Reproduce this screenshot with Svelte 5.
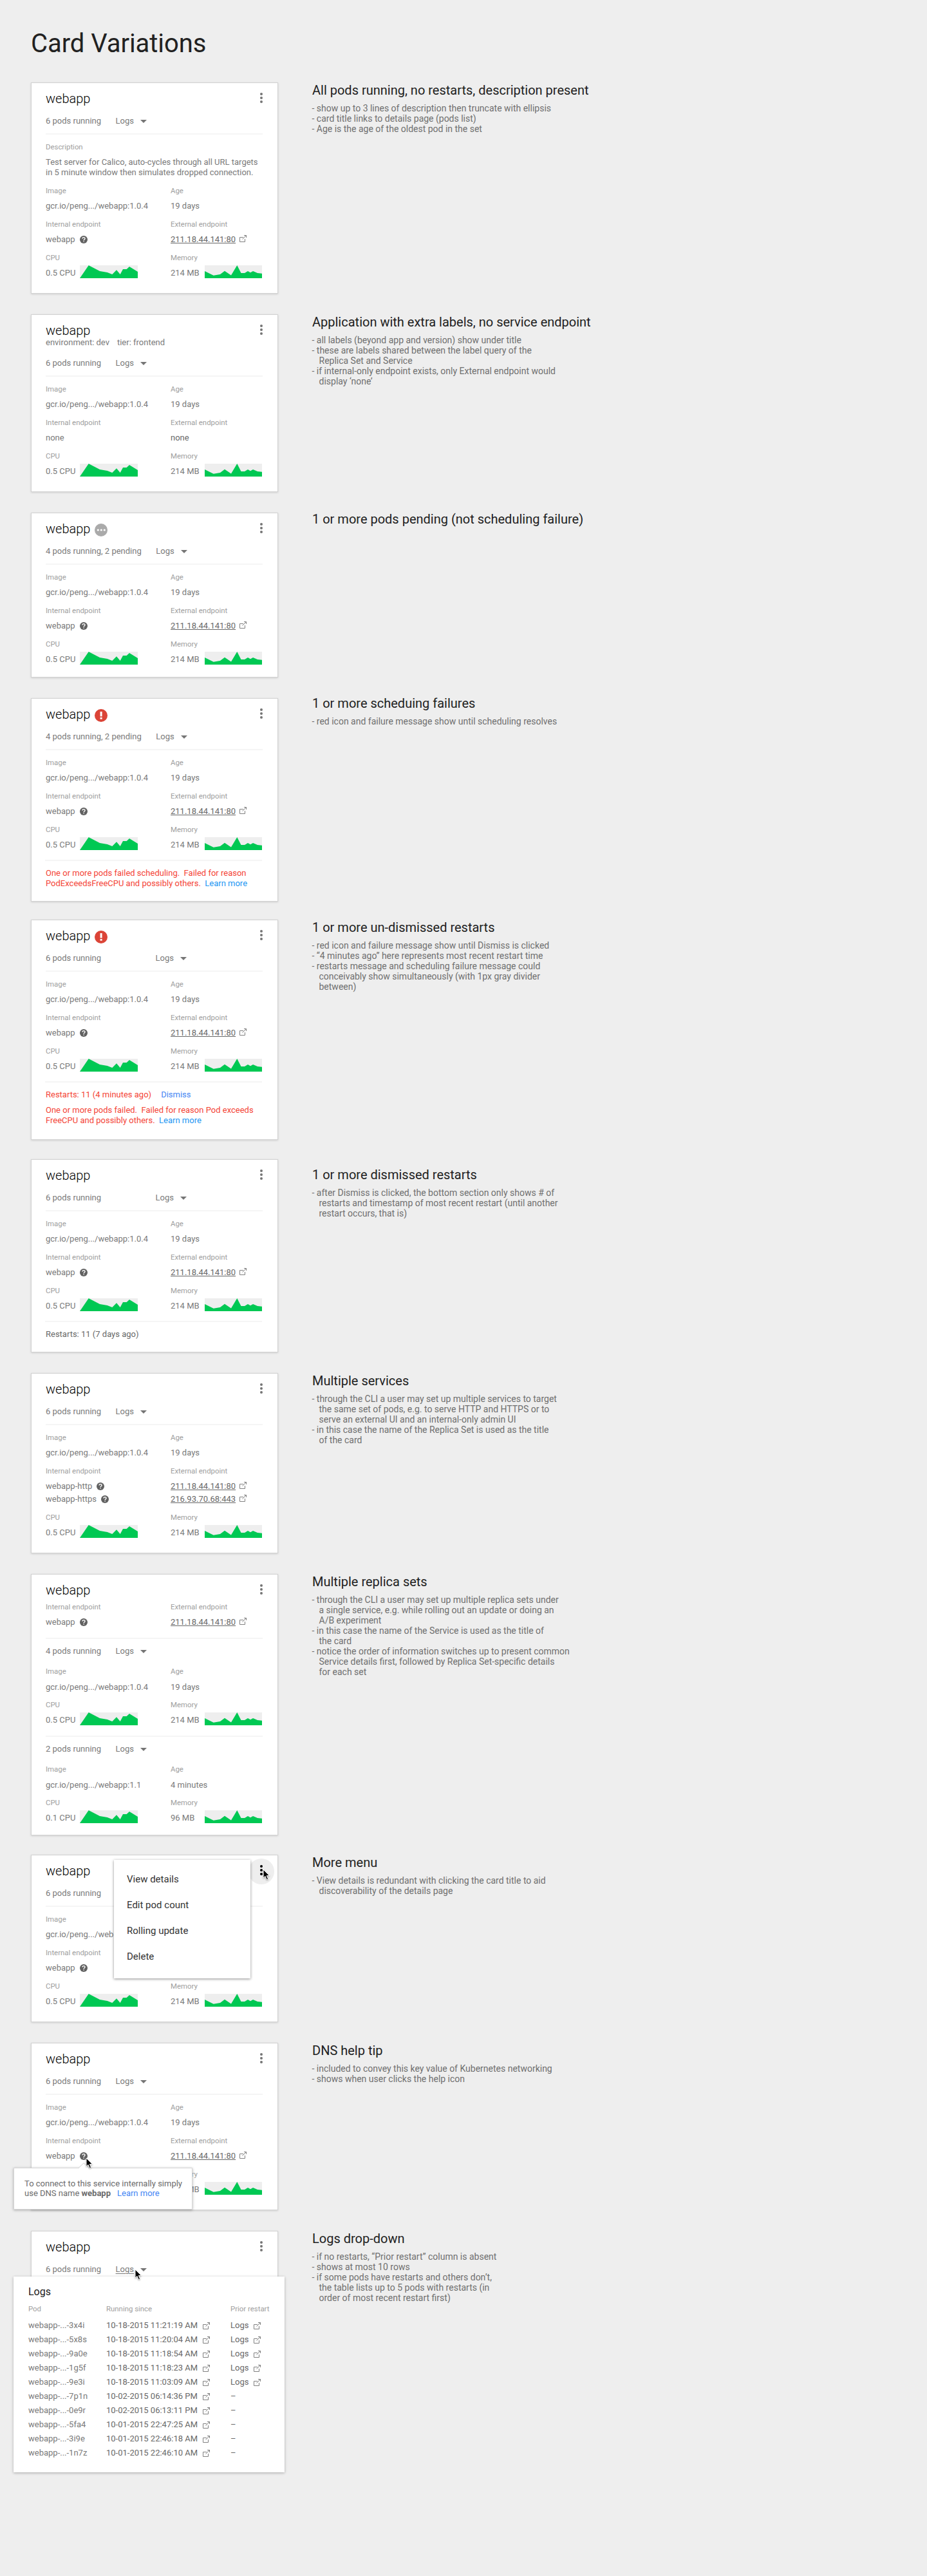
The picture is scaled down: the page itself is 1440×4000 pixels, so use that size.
<script lang="ts">
  type Pair = { name: string; ip: string };
  type Field =
    | { kind: 'description'; text: string }
    | { kind: 'image'; image: string; age: string }
    | { kind: 'endpoints'; items: Pair[] }
    | { kind: 'usage'; cpu: string; memory: string };
  type Section = { pods?: string; wideLogs?: boolean; fields: Field[] };
  type Variation = {
    id: string;
    heading: string;
    notes: string[];
    status?: 'pending' | 'error';
    labels?: string[];
    sections: Section[];
    footer?: 'scheduling' | 'restarts' | 'dismissed';
    overlay?: 'menu' | 'tip' | 'logs';
  };

  const image: Field = { kind: 'image', image: 'gcr.io/peng.../webapp:1.0.4', age: '19 days' };
  const endpoint: Field = { kind: 'endpoints', items: [{ name: 'webapp', ip: '211.18.44.141:80' }] };
  const noEndpoint: Field = { kind: 'endpoints', items: [] };
  const usage: Field = { kind: 'usage', cpu: '0.5 CPU', memory: '214 MB' };

  const variations: Variation[] = [
    {
      id: 'description',
      heading: 'All pods running, no restarts, description present',
      notes: [
        'show up to 3 lines of description then truncate with ellipsis',
        'card title links to details page (pods list)',
        'Age is the age of the oldest pod in the set',
      ],
      sections: [
        {
          pods: '6 pods running',
          fields: [
            {
              kind: 'description',
              text: 'Test server for Calico, auto-cycles through all URL targets\nin 5 minute window then simulates dropped connection.',
            },
            image,
            endpoint,
            usage,
          ],
        },
      ],
    },
    {
      id: 'labels',
      heading: 'Application with extra labels, no service endpoint',
      notes: [
        'all labels (beyond app and version) show under title',
        'these are labels shared between the label query of the\nReplica Set and Service',
        'if internal-only endpoint exists, only External endpoint would\ndisplay ‘none’',
      ],
      labels: ['environment: dev', 'tier: frontend'],
      sections: [{ pods: '6 pods running', fields: [image, noEndpoint, usage] }],
    },
    {
      id: 'pending',
      heading: '1 or more pods pending (not scheduling failure)',
      notes: [],
      status: 'pending',
      sections: [{ pods: '4 pods running, 2 pending', wideLogs: true, fields: [image, endpoint, usage] }],
    },
    {
      id: 'scheduling',
      heading: '1 or more scheduing failures',
      notes: ['red icon and failure message show until scheduling resolves'],
      status: 'error',
      sections: [{ pods: '4 pods running, 2 pending', wideLogs: true, fields: [image, endpoint, usage] }],
      footer: 'scheduling',
    },
    {
      id: 'restarts',
      heading: '1 or more un-dismissed restarts',
      notes: [
        'red icon and failure message show until Dismiss is clicked',
        '“4 minutes ago” here represents most recent restart time',
        'restarts message and scheduling failure message could\nconceivably show simultaneously (with 1px gray divider\nbetween)',
      ],
      status: 'error',
      sections: [{ pods: '6 pods running', wideLogs: true, fields: [image, endpoint, usage] }],
      footer: 'restarts',
    },
    {
      id: 'dismissed',
      heading: '1 or more dismissed restarts',
      notes: [
        'after Dismiss is clicked, the bottom section only shows # of\nrestarts and timestamp of most recent restart (until another\nrestart occurs, that is)',
      ],
      sections: [{ pods: '6 pods running', wideLogs: true, fields: [image, endpoint, usage] }],
      footer: 'dismissed',
    },
    {
      id: 'services',
      heading: 'Multiple services',
      notes: [
        'through the CLI a user may set up multiple services to target\nthe same set of pods, e.g. to serve HTTP and HTTPS or to\nserve an external UI and an internal-only admin UI',
        'in this case the name of the Replica Set is used as the title\nof the card',
      ],
      sections: [
        {
          pods: '6 pods running',
          fields: [
            image,
            {
              kind: 'endpoints',
              items: [
                { name: 'webapp-http', ip: '211.18.44.141:80' },
                { name: 'webapp-https', ip: '216.93.70.68:443' },
              ],
            },
            usage,
          ],
        },
      ],
    },
    {
      id: 'replicas',
      heading: 'Multiple replica sets',
      notes: [
        'through the CLI a user may set up multiple replica sets under\na single service, e.g. while rolling out an update or doing an\nA/B experiment',
        'in this case the name of the Service is used as the title of\nthe card',
        'notice the order of information switches up to present common\nService details first, followed by Replica Set-specific details\nfor each set',
      ],
      sections: [
        { fields: [endpoint] },
        { pods: '4 pods running', fields: [image, usage] },
        {
          pods: '2 pods running',
          fields: [
            { kind: 'image', image: 'gcr.io/peng.../webapp:1.1', age: '4 minutes' },
            { kind: 'usage', cpu: '0.1 CPU', memory: '96 MB' },
          ],
        },
      ],
    },
    {
      id: 'menu',
      heading: 'More menu',
      notes: ['View details is redundant with clicking the card title to aid\ndiscoverability of the details page'],
      sections: [{ pods: '6 pods running', fields: [image, endpoint, usage] }],
      overlay: 'menu',
    },
    {
      id: 'tip',
      heading: 'DNS help tip',
      notes: ['included to convey this key value of Kubernetes networking', 'shows when user clicks the help icon'],
      sections: [{ pods: '6 pods running', fields: [image, endpoint, usage] }],
      overlay: 'tip',
    },
    {
      id: 'logs',
      heading: 'Logs drop-down',
      notes: [
        'if no restarts, “Prior restart” column is absent',
        'shows at most 10 rows',
        'if some pods have restarts and others don’t,\nthe table lists up to 5 pods with restarts (in\norder of most recent restart first)',
      ],
      sections: [{ pods: '6 pods running', fields: [] }],
      overlay: 'logs',
    },
  ];

  const menuItems = ['View details', 'Edit pod count', 'Rolling update', 'Delete'];

  const logRows = [
    { pod: '3x4i', since: '10-18-2015 11:21:19 AM', prior: true },
    { pod: '5x8s', since: '10-18-2015 11:20:04 AM', prior: true },
    { pod: '9a0e', since: '10-18-2015 11:18:54 AM', prior: true },
    { pod: '1g5f', since: '10-18-2015 11:18:23 AM', prior: true },
    { pod: '9e3i', since: '10-18-2015 11:03:09 AM', prior: true },
    { pod: '7p1n', since: '10-02-2015 06:14:36 PM', prior: false },
    { pod: '0e9r', since: '10-02-2015 06:13:11 PM', prior: false },
    { pod: '5fa4', since: '10-01-2015 22:47:25 AM', prior: false },
    { pod: '3i9e', since: '10-01-2015 22:46:18 AM', prior: false },
    { pod: '1n7z', since: '10-01-2015 22:46:10 AM', prior: false },
  ];
</script>

{#snippet external()}
  <svg class="external" width="11" height="11" viewBox="0 0 11 11" fill="none" stroke="#808080">
    <path d="M6 3.5H.5v7h8V6M7 .5h3.5V4M10.5.5L4.5 6.5" />
  </svg>
{/snippet}

{#snippet cursor()}
  <svg class="cursor" width="13" height="19" viewBox="0 0 13 19">
    <path d="M1 1v13.2l3-2.8 2.3 5.3 2.3-1-2.3-5.1h4.3z" fill="#000" stroke="#fff" stroke-width="1" />
  </svg>
{/snippet}

{#snippet cpuChart()}
  <svg class="chart" width="90" height="20" viewBox="0 0 90 20">
    <path d="M0 20L13.7 0 31 9l11.7 2 7.6 3 6.7-6.7L62.7 14 67 6h5.7L77 2l13 8v10z" fill="#00c853" />
  </svg>
{/snippet}

{#snippet memoryChart()}
  <svg class="chart" width="89" height="20" viewBox="0 0 89 20">
    <path d="M0 9l13.7 6.7L24 14l7-5.3 10 6.8L50.3 0l6.2 12H62l5-3 4 2.3L75 9l7 3 7 .8V20H0z" fill="#00c853" />
  </svg>
{/snippet}

{#snippet row(field: Field)}
  {#if field.kind === 'description'}
    <div class="field">
      <div class="label">Description</div>
      <div class="value description">{field.text}</div>
    </div>
  {:else if field.kind === 'image'}
    <div class="pair">
      <div class="field"><div class="label">Image</div><div class="value">{field.image}</div></div>
      <div class="field"><div class="label">Age</div><div class="value">{field.age}</div></div>
    </div>
  {:else if field.kind === 'endpoints'}
    <div class="pair">
      <div class="field">
        <div class="label">Internal endpoint</div>
        {#each field.items as item}
          <div class="value">
            {item.name}
            <svg class="help" width="12" height="12" viewBox="0 0 12 12">
              <circle cx="6" cy="6" r="6" fill="#616161" />
              <path d="M4 4.6C4 3.400 4.900 2.600 6 2.600s2 .8 2 1.800C8 5.700 6.100 5.800 6.100 7.400" fill="none" stroke="#fff" stroke-width="1.400" />
              <path d="M5.400 8.400h1.400v1.400H5.400z" fill="#fff" />
            </svg>
          </div>
        {:else}
          <div class="value">none</div>
        {/each}
      </div>
      <div class="field">
        <div class="label">External endpoint</div>
        {#each field.items as item}
          <div class="value strong"><span class="ip">{item.ip}</span>{@render external()}</div>
        {:else}
          <div class="value strong">none</div>
        {/each}
      </div>
    </div>
  {:else}
    <div class="pair">
      <div class="field usage">
        <div class="label">CPU</div>
        <div class="meter"><span class="value">{field.cpu}</span>{@render cpuChart()}</div>
      </div>
      <div class="field usage">
        <div class="label">Memory</div>
        <div class="meter"><span class="value">{field.memory}</span>{@render memoryChart()}</div>
      </div>
    </div>
  {/if}
{/snippet}

<main>
  <h1>Card Variations</h1>
  {#each variations as v}
    <section class="variation {v.id}">
      <article class="card">
        <header>
          <h2>webapp</h2>
          {#if v.status === 'pending'}
            <svg class="status" width="20" height="20" viewBox="0 0 20 20">
              <circle cx="10" cy="10" r="10" fill="#aaa" />
              <g fill="#fff"><circle cx="5.3" cy="10" r="1.6" /><circle cx="10.3" cy="10" r="1.6" /><circle cx="15.3" cy="10" r="1.6" /></g>
            </svg>
          {:else if v.status === 'error'}
            <svg class="status" width="20" height="20" viewBox="0 0 20 20">
              <circle cx="10" cy="10" r="10" fill="#db4437" />
              <path d="M8.6 4h3v7.6h-3zM8.6 13h3v2.8h-3z" fill="#fff" />
            </svg>
          {/if}
          <svg class="kebab" width="4" height="16" viewBox="0 0 4 16">
            <circle cx="2" cy="2" r="2" /><circle cx="2" cy="8" r="2" /><circle cx="2" cy="14" r="2" />
          </svg>
        </header>
        {#if v.labels}
          <div class="tags">{#each v.labels as l}<span>{l}</span>{/each}</div>
        {/if}
        {#each v.sections as s, i}
          {#if i > 0}<hr />{/if}
          {#if s.pods}
            <div class="podline">
              <span class="pods" class:wide={s.wideLogs}>{s.pods}</span>
              <span class="logslink">Logs</span>
              <svg width="10" height="5" viewBox="0 0 10 5"><path d="M0 0h10L5 5z" fill="#757575" /></svg>
            </div>
            {#if v.id !== 'replicas' && s.fields.length}<hr />{/if}
          {/if}
          {#if s.fields.length}
            <div class="fields">{#each s.fields as f}{@render row(f)}{/each}</div>
          {/if}
        {/each}
        {#if v.footer}
          <hr class="foot" />
          <div class="messages">
            {#if v.footer === 'scheduling'}
              <p class="error">One or more pods failed scheduling.&nbsp; Failed for reason<br />PodExceedsFreeCPU and possibly others.&nbsp; <span class="link">Learn more</span></p>
            {:else if v.footer === 'restarts'}
              <p class="error">Restarts: 11 (4 minutes ago)<span class="link dismiss">Dismiss</span></p>
              <p class="error">One or more pods failed.&nbsp; Failed for reason Pod exceeds<br />FreeCPU and possibly others.&nbsp; <span class="link">Learn more</span></p>
            {:else}
              <p>Restarts: 11 (7 days ago)</p>
            {/if}
          </div>
        {/if}

        {#if v.overlay === 'menu'}
          <div class="halo"></div>
          <svg class="kebab active" width="4" height="16" viewBox="0 0 4 16">
            <circle cx="2" cy="2" r="2" /><circle cx="2" cy="8" r="2" /><circle cx="2" cy="14" r="2" />
          </svg>
          <ul class="popup">
            {#each menuItems as m}<li>{m}</li>{/each}
          </ul>
          {@render cursor()}
        {:else if v.overlay === 'tip'}
          <div class="tooltip">
            <svg class="beak" width="16" height="9" viewBox="0 0 16 9">
              <path d="M0 9L8 1l8 8z" fill="#fff" /><path d="M0 8.5L8 .7l8 7.8" fill="none" stroke="#d0d0d0" />
            </svg>
            To connect to this service internally simply<br />use DNS name <b>webapp</b><span class="link more">Learn more</span>
          </div>
          {@render cursor()}
        {:else if v.overlay === 'logs'}
          <div class="logpanel">
            <h4>Logs</h4>
            <div class="logrow head"><span>Pod</span><span>Running since</span><span>Prior restart</span></div>
            {#each logRows as r}
              <div class="logrow">
                <span>webapp-...-{r.pod}</span>
                <span class="strong">{r.since}{@render external()}</span>
                <span class="strong">{#if r.prior}Logs{@render external()}{:else}–{/if}</span>
              </div>
            {/each}
          </div>
          {@render cursor()}
        {/if}
      </article>
      <div class="notes">
        <h3>{v.heading}</h3>
        <ul>{#each v.notes as n}<li>- {n}</li>{/each}</ul>
      </div>
    </section>
  {/each}
</main>

<style>
  :global(body) {
    background: #eee;
  }
  main {
    box-sizing: border-box;
    min-height: 4000px;
    padding: 44px 0 0 48px;
    background: #eee;
    font-family: Roboto, 'Liberation Sans', sans-serif;
    font-size: 13px;
    line-height: 16px;
    color: #7a7a7a;
  }
  h1, h2, h3, h4, p, ul {
    margin: 0;
    padding: 0;
    font-weight: 400;
    list-style: none;
  }
  svg {
    display: block;
    flex: none;
  }
  h1 {
    margin: 0 0 37px;
    font-size: 40px;
    line-height: 47px;
    color: #212121;
    letter-spacing: -0.05px;
  }
  .variation {
    display: flex;
    align-items: flex-start;
    gap: 53px;
    margin-bottom: 32px;
  }
  .scheduling {
    margin-bottom: 28px;
  }
  .restarts,
  .replicas {
    margin-bottom: 30px;
  }

  .card {
    position: relative;
    box-sizing: border-box;
    width: 384px;
    padding: 12px 23px 23px 22px;
    border: 1px solid #d2d2d2;
    background: #fff;
    box-shadow: 0 1px 3px rgba(0, 0, 0, 0.14);
  }
  .pending .card,
  .scheduling .card,
  .dismissed .card {
    padding-bottom: 19px;
  }
  .restarts .card {
    padding-bottom: 21px;
  }
  .replicas .card {
    padding-bottom: 18px;
  }
  .logs .card {
    height: 240px;
  }

  header {
    display: flex;
    align-items: flex-start;
    height: 23px;
  }
  h2 {
    width: 70px;
    font-size: 20px;
    font-weight: 300;
    line-height: 24px;
    color: #000;
  }
  .status {
    margin: 4px 0 0 6px;
  }
  .kebab {
    margin: 3px 0 0 auto;
    fill: #757575;
  }
  .tags {
    display: flex;
    gap: 12px;
  }
  .podline {
    display: flex;
    align-items: center;
    margin-top: 16px;
  }
  .pods {
    margin-right: 22.5px;
  }
  .pods.wide {
    min-width: 148px;
  }
  .logslink {
    margin-right: 10px;
  }
  .logs .logslink {
    text-decoration: underline;
    text-underline-offset: 2px;
    text-decoration-thickness: 1px;
  }
  hr {
    height: 2px;
    margin: 11px 0 12px;
    border: 0;
    background: #f5f5f5;
  }
  hr.foot {
    margin: 15px 1px 11px -1px;
  }

  .fields {
    display: flex;
    flex-direction: column;
    gap: 13px;
  }
  .pair {
    display: grid;
    grid-template-columns: 194px 1fr;
  }
  .label {
    margin-bottom: 9px;
    font-size: 11.4px;
    line-height: 14px;
    color: #9e9e9e;
  }
  .usage .label {
    margin-bottom: 5px;
  }
  .field .value {
    display: flex;
    align-items: center;
    white-space: nowrap;
  }
  .field .value + .value {
    margin-top: 4px;
  }
  .field .description {
    display: block;
    white-space: pre-line;
  }
  .strong {
    color: #686868;
  }
  .help {
    margin-left: 7px;
  }
  .ip {
    text-decoration: underline;
    text-decoration-thickness: 1px;
    text-underline-offset: 1px;
  }
  .external {
    margin: -3px 0 0 6px;
  }
  .meter {
    display: grid;
    grid-template-columns: 53px auto;
    justify-content: start;
    align-items: end;
  }
  .chart {
    background: #eee;
  }

  .replicas header + .fields {
    margin-top: 8px;
  }
  .replicas hr {
    margin: 16px 0 11px;
  }
  .replicas .podline {
    margin: 0 0 16px;
  }
  .replicas .podline + .fields {
    gap: 12px;
  }
  .replicas .podline + .fields .pair:first-child .label {
    margin-bottom: 10px;
  }

  .messages {
    display: grid;
    gap: 8px;
    color: #686868;
  }
  .messages .error {
    color: #f44336;
  }
  .link {
    color: #2196f3;
  }
  .link.dismiss {
    margin-left: 15px;
    color: #4285f4;
  }
  .link.more {
    margin-left: 10px;
    color: #4285f4;
  }

  .notes {
    white-space: pre-line;
  }
  .pending .notes {
    margin-top: -2px;
  }
  .scheduling .notes {
    margin-top: -4px;
  }
  .dismissed .notes {
    margin-top: 12px;
  }
  h3 {
    font-size: 20px;
    line-height: 24px;
    color: #212121;
  }
  .notes ul {
    margin-top: 8px;
    font-size: 14px;
    line-height: 16px;
    color: #6f6f6f;
  }
  .notes li {
    padding-left: 10.5px;
    text-indent: -11px;
    word-spacing: -0.02px;
  }

  .halo {
    position: absolute;
    top: 5px;
    left: 337px;
    width: 40px;
    height: 40px;
    border-radius: 50%;
    background: #eee;
  }
  .kebab.active {
    position: absolute;
    top: 15px;
    left: 355px;
    margin: 0;
    fill: #000;
  }
  .popup {
    position: absolute;
    top: 7px;
    left: 128px;
    box-sizing: border-box;
    width: 212px;
    height: 184px;
    padding: 10px 20px;
    background: #fff;
    box-shadow: 0 1px 4px rgba(0, 0, 0, 0.45);
    font-size: 15px;
    line-height: 40px;
    color: #333;
  }
  .cursor {
    position: absolute;
    filter: drop-shadow(0 1px 1px rgba(0, 0, 0, 0.35));
  }
  .menu .cursor {
    top: 21px;
    left: 359px;
  }
  .tip .cursor {
    top: 177px;
    left: 84px;
  }
  .logs .cursor {
    top: 58px;
    left: 160px;
  }
  .tooltip {
    position: absolute;
    top: 193px;
    left: -28px;
    box-sizing: border-box;
    width: 278px;
    height: 65px;
    padding: 16px 0 0 16px;
    border: 1px solid #d6d6d6;
    background: #fff;
    box-shadow: 0 1px 4px rgba(0, 0, 0, 0.3);
    line-height: 15px;
    white-space: nowrap;
    color: #6b6b6b;
  }
  .beak {
    position: absolute;
    top: -9px;
    left: 100px;
  }
  .logpanel {
    position: absolute;
    top: 70px;
    left: -28px;
    box-sizing: border-box;
    width: 421px;
    height: 304px;
    padding: 14px 0 0 23px;
    background: #fff;
    box-shadow: 0 1px 4px rgba(0, 0, 0, 0.3);
  }
  h4 {
    font-size: 16px;
    line-height: 19px;
    color: #212121;
  }
  .logrow {
    display: grid;
    grid-template-columns: 121px 193px 1fr;
    line-height: 22px;
  }
  .logrow span {
    display: flex;
    align-items: center;
  }
  .logrow.head {
    margin: 10px 0 8px;
    font-size: 11.4px;
    line-height: 14px;
    color: #9e9e9e;
  }
  .logrow .external {
    margin: 0 0 0 8px;
  }
</style>
